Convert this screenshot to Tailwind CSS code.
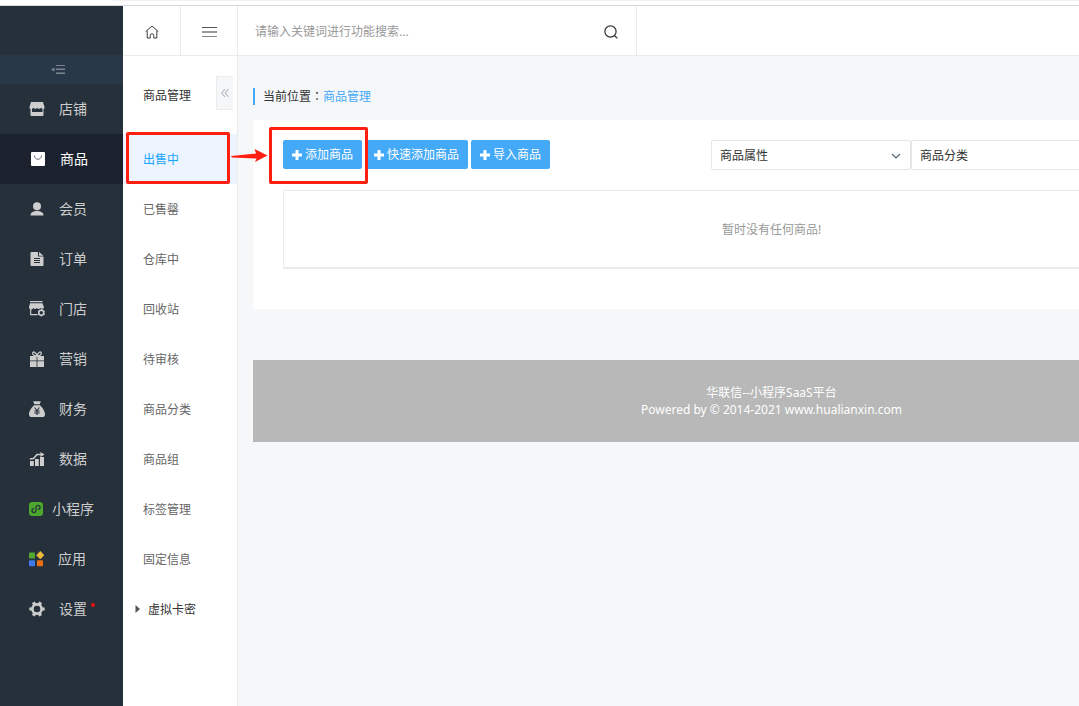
<!DOCTYPE html>
<html lang="zh-CN">
<head>
<meta charset="utf-8">
<title>商品管理</title>
<script src="https://cdn.jsdelivr.net/npm/@tailwindcss/browser@4"></script>
</head>
<body class="flex h-screen flex-col overflow-hidden bg-white font-['Noto_Sans','Noto_Sans_CJK_SC',sans-serif] text-xs text-[#333]">
<div class="h-[6px] shrink-0 border-b border-[#d8dadb]"><div class="ml-[112px] h-px bg-[#f1f1f1]"></div></div>

<div class="relative flex min-h-0 flex-1">
  <nav class="w-[123px] shrink-0 bg-[#25303b]" aria-label="主菜单">
    <div class="h-[49px]"></div>
    <button class="flex h-[29px] w-full items-center justify-center border-t border-[#2b3644] bg-[#293848] pr-[7px]" aria-label="收起">
      <svg class="h-[10px] w-[14px]" viewBox="0 0 14 10"><path d="M3.500 2.500v4L0 4.500z" fill="#7b858f"/><path d="M5 .5h9M5 4.500h9M5 8.500h9" stroke="#7b858f" stroke-width="1"/><path d="M5 3.500h9M5 7.500h9" stroke="#53606d" stroke-width="1"/></svg>
    </button>
    <ul class="text-sm text-[#cdcdcd]">
      <li><a href="#" class="flex h-[50px] items-center gap-[14px] pl-[29px]">
        <svg class="size-4" viewBox="0 0 16 16"><path fill="#cdcdcd" fill-rule="evenodd" d="M2 1h12l1.500 5a2 2 0 0 1-1 2.200V14a1 1 0 0 1-1 1h-11a1 1 0 0 1-1-1V8.200A2 2 0 0 1 .5 6zM3 7.800V11h10.500V7.800l-1.700-.8-1.800 1-1.900-1-1.800 1-1.700-1z"/></svg>
        店铺</a></li>
      <li><a href="#" class="flex h-[50px] items-center gap-[14px] bg-[#1b212d] pl-[30px] text-white" aria-current="page">
        <svg class="size-4" viewBox="0 0 16 16"><rect x="1" y="1" width="14" height="14" rx="1" fill="#fff"/><path d="M4.500 4.500c0 5 7 5 7 0" fill="none" stroke="#6b717d" stroke-width="1"/></svg>
        商品</a></li>
      <li><a href="#" class="flex h-[50px] items-center gap-[14px] pl-[29px]">
        <svg class="size-4" viewBox="0 0 16 16"><circle cx="8" cy="5.200" r="4" fill="#cdcdcd"/><path fill="#cdcdcd" d="M1.500 14.500c0-3 2.500-4.500 6.500-4.500s6.500 1.500 6.500 4.500z"/></svg>
        会员</a></li>
      <li><a href="#" class="flex h-[50px] items-center gap-[14px] pl-[29px]">
        <svg class="size-4" viewBox="0 0 16 16"><path fill="#cdcdcd" d="M2.500 1h6.500v4.500h5.500V14a1 1 0 0 1-1 1h-11a1 1 0 0 1-1-1V2a1 1 0 0 1 1-1zM10 1l4.500 3.700H10z"/><path d="M5 7.500h6M5 9.500h6M5 11.500h6" stroke="#25303b" stroke-width="1"/></svg>
        订单</a></li>
      <li><a href="#" class="flex h-[50px] items-center gap-[14px] pl-[29px]">
        <svg class="size-4" viewBox="0 0 16 16"><path fill="#cdcdcd" d="M1 0h12.500v1.300H1zM1 2.200h12.500L15 6.500a2 2 0 0 1-3.500.5 2.200 2.200 0 0 1-3.700 0 2.200 2.200 0 0 1-3.700 0A2.100 2.100 0 0 1 0 6.300z"/><path d="M1.700 8v5.700h7M12.800 8v1" fill="none" stroke="#cdcdcd" stroke-width="1.200"/><circle cx="12.300" cy="11.800" r="2.500" fill="none" stroke="#cdcdcd" stroke-width="1.600"/><path d="M12.300 8.200v1.200M12.300 14.200v1.300M9.200 10l1 .6M14.400 13l1.100.6M9.200 13.600l1-.6M14.400 10.600l1.100-.6" stroke="#cdcdcd" stroke-width="1.200"/></svg>
        门店</a></li>
      <li><a href="#" class="flex h-[50px] items-center gap-[14px] pl-[29px]">
        <svg class="size-4" viewBox="0 0 16 16"><path fill="#cdcdcd" d="M1 5h6.600v4.500H1zM8.400 5H15v4.500H8.400zM1 10.200h6.600V16H1zM8.400 10.200H15V16H8.400z"/><path d="M8 5C6 5 3.200 4 3.700 2S7 1 8 5c1-4 3.800-5 4.300-3S10 5 8 5z" fill="none" stroke="#cdcdcd" stroke-width="1.300"/></svg>
        营销</a></li>
      <li><a href="#" class="flex h-[50px] items-center gap-[14px] pl-[29px]">
        <svg class="size-4" viewBox="0 0 16 16"><path fill="#cdcdcd" d="M4.200 0q1.200.8 2.400 0 1.300.8 2.600 0 1.200.8 2.600 0L10.800 3.200H5.200zM5 4.200h6c2.500 2.200 5 6 5 9 0 2-1 2.800-3 2.800H3c-2 0-3-.8-3-2.800 0-3 2.500-6.800 5-9z"/><path d="M5.500 6.500L8 9.500l2.500-3M8 9.500V14M5.300 10h5.400M5.300 12h5.400" fill="none" stroke="#25303b" stroke-width="1.100"/></svg>
        财务</a></li>
      <li><a href="#" class="flex h-[50px] items-center gap-[14px] pl-[29px]">
        <svg class="size-4" viewBox="0 0 16 16"><path fill="#cdcdcd" d="M1 10h3.800v5H1zM6 8h3.800v7H6zM11 6h4v9h-4z"/><path d="M.8 8L4.500 7.500 8 3.500h5" fill="none" stroke="#cdcdcd" stroke-width="1.600"/><path fill="#cdcdcd" d="M11.500 1l4 2.600-4 2.400z"/></svg>
        数据</a></li>
      <li><a href="#" class="flex h-[50px] items-center gap-2 pl-7">
        <svg class="size-4" viewBox="0 0 16 16"><rect x="1" y="1" width="14" height="14" rx="3" fill="#4ca52c"/><path d="M5.300 7.700a2 2 0 1 0 2.700 2V6.300a2 2 0 1 1 2.700 2" fill="none" stroke="#25303b" stroke-width="1.300" stroke-linecap="round"/></svg>
        小程序</a></li>
      <li><a href="#" class="flex h-[50px] items-center gap-[14px] pl-7">
        <svg class="size-4" viewBox="0 0 16 16"><rect x="1" y="1.500" width="6" height="6" rx=".8" fill="#52a832"/><path d="M12.300.300L16 4.200 12.300 8 8.500 4.200z" fill="#edbb3a" stroke="#edbb3a" stroke-width=".6" stroke-linejoin="round"/><rect x="1" y="9.300" width="6" height="6" rx=".8" fill="#3f78e8"/><rect x="9" y="9.300" width="6" height="6" rx=".8" fill="#ec6f12"/></svg>
        应用</a></li>
      <li><a href="#" class="relative flex h-[50px] items-center gap-[14px] pl-[29px]">
        <svg class="size-4" viewBox="0 0 16 16"><circle cx="8" cy="8" r="4.600" fill="none" stroke="#cdcdcd" stroke-width="2.600"/><path d="M4.400 1.200L5.800 4M11.600 1.200L10.200 4M.3 8H3M15.700 8H13M4.400 14.800L5.800 12M11.600 14.800L10.200 12" stroke="#cdcdcd" stroke-width="3.200"/></svg>
        设置<span class="absolute top-[19px] left-[91px] size-1 rounded-full bg-[#f80d0d]"></span></a></li>
    </ul>
  </nav>

  <div class="flex min-w-0 flex-1 flex-col">
    <header class="flex h-[50px] shrink-0 border-b border-[#ebebeb]">
      <button class="flex w-[58px] items-center justify-center border-r border-[#ebebeb] pt-[3px]" aria-label="首页">
        <svg class="size-[14px]" viewBox="0 0 16 16" fill="none" stroke="#333" stroke-width="1.100"><path d="M.8 7.500L8 1.200l7.200 6.300M2.500 6.500v8.400H6V12a2 2 0 0 1 4 0v2.900h3.500V6.500"/></svg>
      </button>
      <button class="flex w-[57px] items-center justify-center border-r border-[#ebebeb] pt-0.5" aria-label="菜单">
        <svg class="h-3 w-[15px]" viewBox="0 0 15 12"><path d="M0 1.500h15" stroke="#555" stroke-width="1"/><path d="M0 6h15" stroke="#999" stroke-width="2"/><path d="M0 10.500h15" stroke="#888" stroke-width="1"/></svg>
      </button>
      <form class="flex w-[399px] items-center border-r border-[#ebebeb] pt-[3px] pr-[17px] pl-[17px]">
        <input type="text" aria-label="功能搜索" placeholder="请输入关键词进行功能搜索..." class="min-w-0 flex-1 text-xs outline-none placeholder:text-[#999]">
        <button type="button" aria-label="搜索"><svg class="size-4" viewBox="0 0 16 16" fill="none" stroke="#333" stroke-width="1.200"><circle cx="7.500" cy="7.500" r="5.600"/><path d="M11.600 11.700l2.800 2.700"/></svg></button>
      </form>
    </header>

    <div class="flex min-h-0 flex-1">
      <aside class="w-[115px] shrink-0 border-r border-[#ebebeb] bg-white text-[#666]">
        <div class="flex h-[78px] items-center pl-5 text-[#333]">
          <h2 class="pt-0.5">商品管理</h2>
          <button class="mt-5 mr-1 ml-auto flex h-[34px] w-[17px] items-center justify-center self-start border border-r-0 border-[#ebebeb] bg-[#f5f6f8]" aria-label="折叠">
            <svg class="size-2" viewBox="0 0 8 8" fill="none" stroke="#b5bdc6" stroke-width="1.200"><path d="M4 0L.8 4 4 8M7.500 0L4.300 4l3.200 4"/></svg>
          </button>
        </div>
        <ul class="leading-[52px]">
          <li><a href="#" class="block h-[50px] bg-[#ebf4ff] pl-5 text-[#1aa5fb]">出售中</a></li>
          <li><a href="#" class="block h-[50px] pl-5">已售罄</a></li>
          <li><a href="#" class="block h-[50px] pl-5">仓库中</a></li>
          <li><a href="#" class="block h-[50px] pl-5">回收站</a></li>
          <li><a href="#" class="block h-[50px] pl-5">待审核</a></li>
          <li><a href="#" class="block h-[50px] pl-5">商品分类</a></li>
          <li><a href="#" class="block h-[50px] pl-5">商品组</a></li>
          <li><a href="#" class="block h-[50px] pl-5">标签管理</a></li>
          <li><a href="#" class="block h-[50px] pl-5">固定信息</a></li>
          <li><a href="#" class="flex h-[50px] items-center gap-2 pl-3 text-[#333]"><svg class="h-2 w-[5px]" viewBox="0 0 5 8"><path d="M.5 0L5 4 .5 8z" fill="#555"/></svg><span class="h-[50px]">虚拟卡密</span></a></li>
        </ul>
      </aside>

      <main class="min-w-0 flex-1 overflow-hidden bg-[#f5f7f9]">
        <div class="min-w-[1067px] px-[15px] pt-8">
          <p class="border-l-2 border-[#44a9f6] pl-2 leading-4">当前位置<span lang="zh-TW" class="font-['Noto_Sans_CJK_TC']">：</span><a href="#" class="text-[#44a9f6]">商品管理</a></p>
          <section class="mt-[15px] bg-white px-[30px] pt-5 pb-10">
            <div class="flex justify-between">
              <div class="flex gap-[3px] text-white">
                <button class="flex h-[29px] items-center gap-[3px] rounded-xs bg-[#44a9f6] px-[9px]"><svg class="size-[10px]" viewBox="0 0 10 10"><path d="M5 0v10M0 5h10" stroke="#fff" stroke-width="3"/></svg>添加商品</button>
                <button class="flex h-[29px] items-center gap-[3px] rounded-xs bg-[#44a9f6] px-[9px]"><svg class="size-[10px]" viewBox="0 0 10 10"><path d="M5 0v10M0 5h10" stroke="#fff" stroke-width="3"/></svg>快速添加商品</button>
                <button class="flex h-[29px] items-center gap-[3px] rounded-xs bg-[#44a9f6] px-[9px]"><svg class="size-[10px]" viewBox="0 0 10 10"><path d="M5 0v10M0 5h10" stroke="#fff" stroke-width="3"/></svg>导入商品</button>
              </div>
              <div class="flex w-[549px]">
                <div class="relative w-[200px]">
                  <select aria-label="商品属性" class="h-[30px] w-full appearance-none rounded-xs border border-[#e6e6e6] bg-white px-2 pt-0.5 text-xs"><option>商品属性</option></select>
                  <svg class="pointer-events-none absolute top-3 right-[10px] h-2 w-[10px]" viewBox="0 0 10 8" fill="none" stroke="#566574" stroke-width="1.200"><path d="M1 2l4 4 4-4"/></svg>
                </div>
                <select aria-label="商品分类" class="h-[30px] flex-1 appearance-none rounded-xs border border-[#e6e6e6] bg-white px-2 pt-0.5 text-xs"><option>商品分类</option></select>
              </div>
            </div>
            <div class="mt-5 flex h-[79px] items-center justify-center rounded-xs border border-b-2 border-[#ebebeb] pt-0.5 text-[#999]">暂时没有任何商品!</div>
          </section>
          <footer class="mt-[51px] bg-[#b7b8b7] py-6 text-center leading-[17px] text-white">
            <p>华联信--小程序SaaS平台</p>
            <p>Powered by © 2014-2021 www.hualianxin.com</p>
          </footer>
        </div>
      </main>
    </div>
  </div>

  <div class="pointer-events-none absolute top-[126px] left-[126px] h-[52px] w-[104px] rounded-xs border-3 border-[#ff1e10]"></div>
  <div class="pointer-events-none absolute top-[121px] left-[269px] h-[57px] w-[99px] rounded-xs border-3 border-[#ff1e10]"></div>
  <svg class="pointer-events-none absolute top-[142px] left-[231px] h-[15px] w-[37px]" viewBox="0 0 37 15"><path d="M0 8L25 5.500 23.500 1l13 6.500L24 14l1.500-3.500L1 9.500z" fill="#ff1e10"/></svg>
</div>
</body>
</html>
